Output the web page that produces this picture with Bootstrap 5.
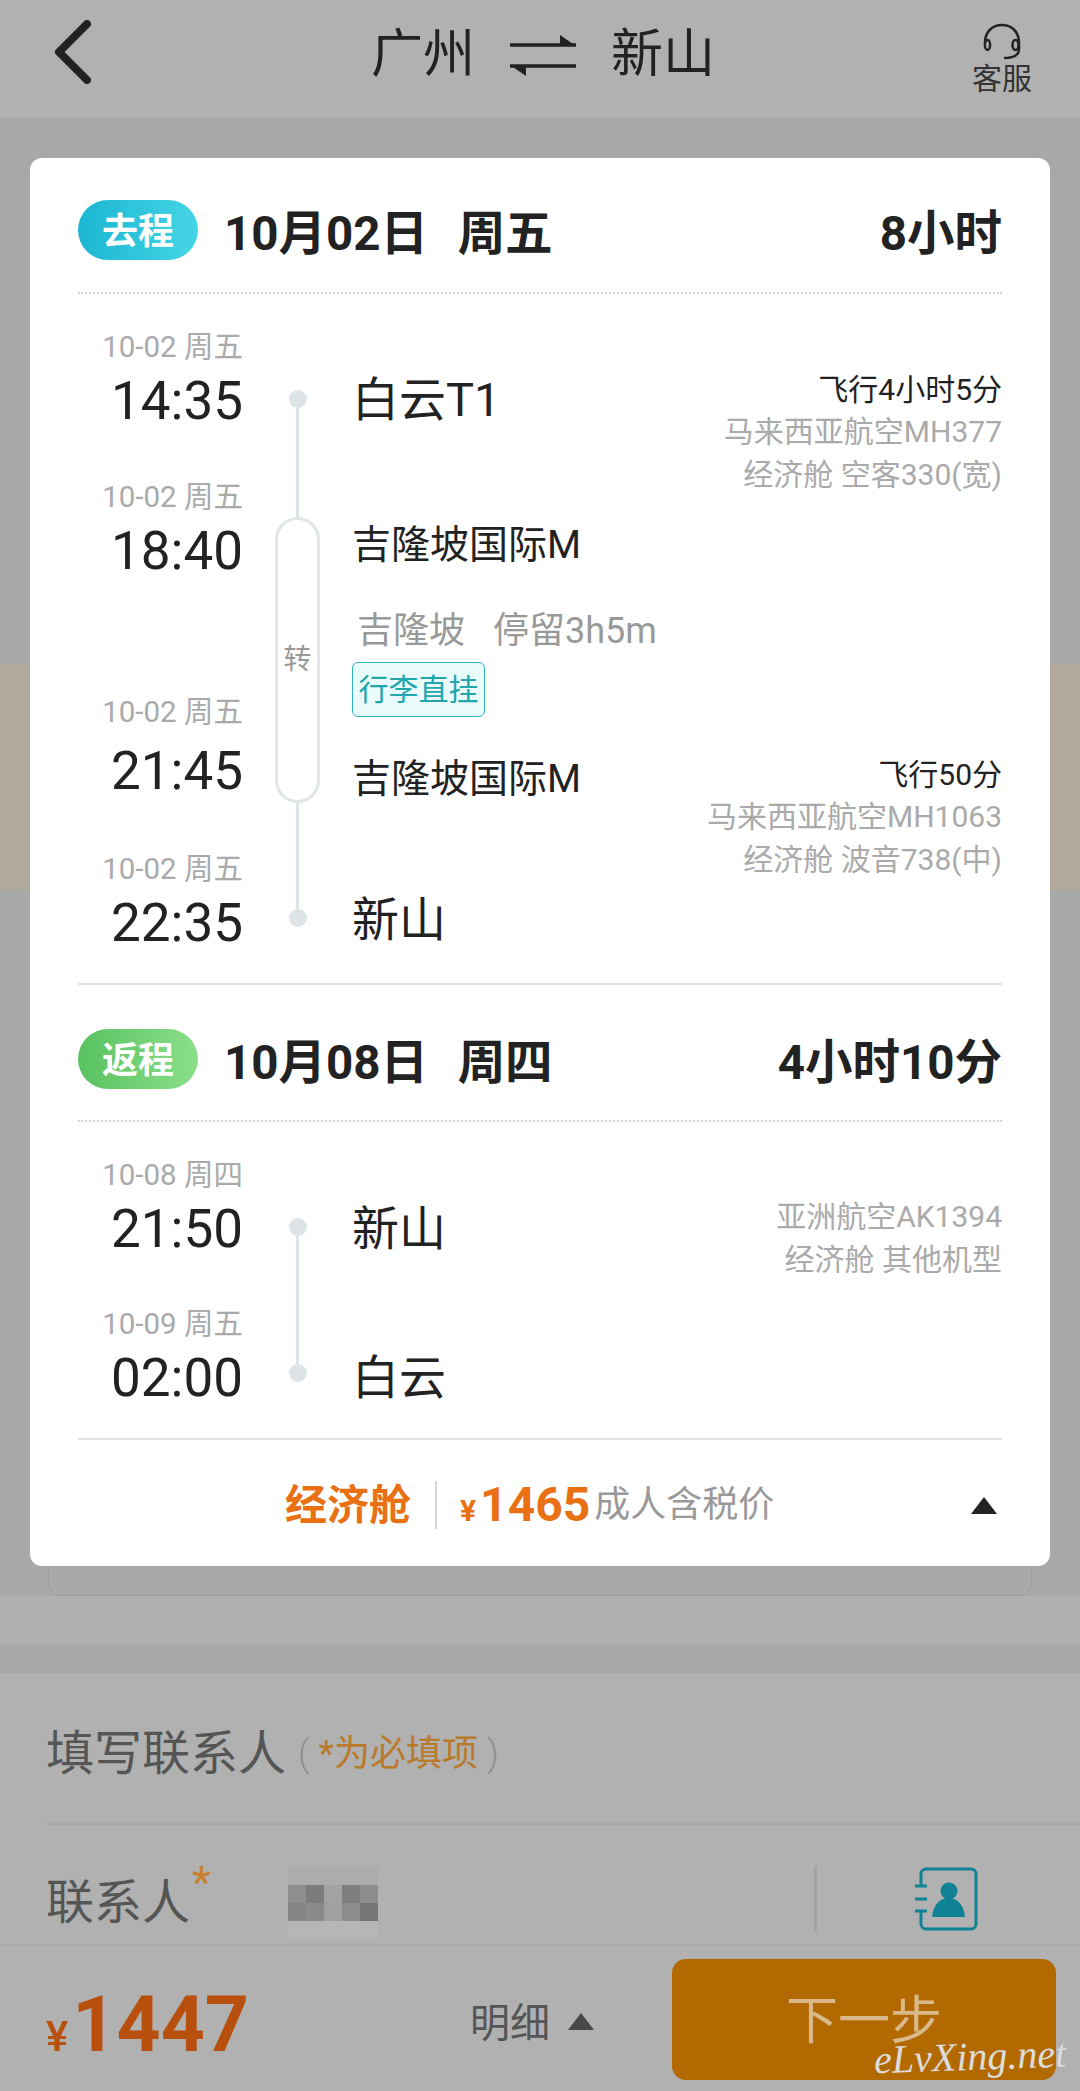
<!DOCTYPE html>
<html lang="zh-CN">
<head>
    <meta charset="UTF-8">
    <meta name="viewport" content="width=device-width, initial-scale=1.0">
    <title>填写订单</title>
    <link href="https://cdn.jsdelivr.net/npm/bootstrap@5.3.0/dist/css/bootstrap.min.css" rel="stylesheet">
    <style>
        body {
            margin: 0;
            background: #a9a9a9;
            font-family: Roboto, "Noto Sans CJK SC", sans-serif;
            color: #222;
        }
        .page-wrap { width: 1080px; height: 2091px; overflow: hidden; }

        /* dimmed page under the panel */
        .top-bar { height: 118px; background: #b1b1b1; padding: 0 48px 0 54px; }
        .top-side { flex: 1 1 0; }
        .route-title { font-size: 52px; line-height: 60px; gap: 34px; margin-top: -8px; color: #222; }
        .service { width: 60px; font-size: 30px; line-height: 36px; color: #333; margin-top: 2px; }
        .under-a { height: 545px; background: #a8a8a8; }
        .under-band { height: 227px; background: #b1aa9d; }
        .under-b { height: 706px; background: #a9a9a9; padding: 0 48px; }
        .under-card { height: 100%; border: 1px solid #9e9e9e; border-top: 0; border-radius: 0 0 12px 12px; }
        .under-c { height: 48px; background: #b0b0b0; }
        .under-d { height: 29px; background: #a9a9a9; }
        .contact-box { height: 273px; background: #b1b1b1; padding-left: 46px; }
        .contact-head { height: 152px; border-bottom: 3px solid #a9a9a9; padding-top: 13px; }
        .contact-title { font-size: 48px; color: #555; }
        .contact-note { font-size: 36px; color: #b97a2c; margin-left: 12px; }
        .contact-note i { font-style: normal; color: #8f8f8f; font-weight: 300; }
        .contact-row { height: 121px; margin-left: -46px; padding-left: 46px; padding-top: 28px; border-bottom: 2px solid #a9a9a9; }
        .contact-label { font-size: 48px; color: #555; width: 242px; position: relative; margin-top: 8px; }
        .contact-star { position: absolute; left: 146px; top: -14px; font-size: 44px; line-height: 60px; color: #c9802c; }
        .mosaic-box { margin-top: 8px; }
        .contact-sep { width: 3px; height: 66px; background: #a3a3a3; margin-left: 436px; }
        .contact-icon { margin-left: 98px; }
        .foot-bar { height: 145px; background: #b1b1b1; padding: 13px 24px 11px 46px; }
        .foot-price { width: 424px; color: #b84f0c; font-weight: 700; font-size: 77px; line-height: 1; margin-top: 11px; }
        .foot-price small { font-size: 42px; font-weight: 500; margin-right: 4px; }
        .foot-detail { font-size: 40px; color: #555; gap: 18px; margin-top: 8px; }
        .next-btn {
            width: 384px;
            height: 121px;
            padding-top: 6px;
            font-size: 52px;
            color: #d9b98a;
            background: #b26a00;
            border: 0;
            border-radius: 14px;
        }
        .tri-up { width: 0; height: 0; border-left: 13px solid transparent; border-right: 13px solid transparent; border-bottom: 17px solid #222; }
        .foot-detail .tri-up { border-bottom-color: #484848; margin-top: -4px; }
        .water-mark {
            position: absolute;
            left: 874px;
            top: 2032px;
            font-family: "Liberation Serif", serif;
            font-style: italic;
            font-size: 40px;
            line-height: 50px;
            color: #dcdcdc;
            transform: rotate(-2deg);
        }

        /* flight panel */
        .trip-panel {
            top: 158px;
            left: 30px;
            width: 1020px;
            height: 1408px;
            padding: 0 48px 0 48px;
            border-radius: 12px;
            --bs-card-bg: #fff;
            background: #fff;
        }
        .trip-head { height: 136px; padding-top: 42px; border-bottom: 2px dotted #d5d5d5; }
        .trip-tag {
            width: 120px;
            height: 60px;
            margin-right: 26px;
            border-radius: 30px;
            color: #fff;
            font-size: 36px;
            font-weight: 700;
            line-height: 64px;
            text-align: center;
        }
        .tag-go { background: linear-gradient(90deg, #1bb6d2, #45d5e6); }
        .tag-back { background: linear-gradient(90deg, #58c25f, #8cdf8a); }
        .trip-date, .trip-total { font-size: 47.5px; font-weight: 700; line-height: 68px; color: #222; white-space: pre; }
        .trip-date span { margin-left: 6px; }
        .trip-body { border-bottom: 2px solid #dfe3e5; }
        .time-col { width: 165px; text-align: right; }
        .stamp-date { font-size: 29.5px; line-height: 36px; color: #aaa; white-space: nowrap; }
        .stamp-time { font-size: 53px; line-height: 72px; color: #222; }
        .rail-col { width: 109px; }
        .rail-dot { width: 18px; height: 18px; border-radius: 50%; background: #dde4e8; }
        .rail-line { width: 3px; background: #dde4e8; }
        .rail-pill {
            width: 45px;
            height: 286px;
            border: 3px solid #e0e6e8;
            border-radius: 23px;
            color: #999;
            font-size: 28px;
        }
        .main-col { min-width: 0; }
        .place-big { font-size: 47px; line-height: 60px; color: #222; }
        .place-mid { font-size: 39px; line-height: 50px; color: #222; }
        .info-box { text-align: right; font-size: 30px; line-height: 43px; color: #aaa; }
        .info-box b { display: block; font-weight: 400; font-size: 30px; line-height: 41px; margin-top: 1px; color: #222; }
        .stop-text { font-size: 36px; line-height: 50px; color: #999; padding-left: 5px; gap: 28px; margin-top: 36px; }
        .bag-tag {
            width: 133px;
            height: 55px;
            margin-top: 6px;
            border: 1px solid #2fb3bd;
            border-radius: 6px;
            background: #eafbfc;
            color: #21a6ae;
            font-size: 30px;
        }
        .trip-foot { height: 124px; padding-left: 207px; padding-right: 5px; padding-top: 6px; }
        .foot-cabin { font-size: 42px; font-weight: 700; color: #ea7014; }
        .foot-rule { width: 2px; height: 48px; background: #d6d6d6; margin: 0 23px 0 24px; }
        .foot-fare { font-size: 48px; font-weight: 700; color: #ea7014; line-height: 1; }
        .foot-fare small { font-size: 30px; margin-right: 4px; }
        .foot-note { font-size: 36px; color: #999; margin-left: 4px; }

        /* one-off vertical offsets of the timeline columns */
        .go-times { padding-top: 35px; }
        .go-t2 { margin-top: 42px; }
        .go-t3 { margin-top: 107px; }
        .go-s3 { margin-top: 5px; }
        .go-t4 { margin-top: 44px; }
        .go-rail { padding-top: 96px; }
        .go-l1 { height: 109px; }
        .go-l2 { height: 106px; }
        .go-main { padding-top: 74px; }
        .go-p1 { margin-top: 2px; }
        .go-p2 { margin-top: 24px; }
        .go-leg2 { margin-top: 36px; }
        .go-p3 { margin-top: 1px; }
        .go-p4 { margin-top: 9px; height: 91px; }
        .go-body { height: 691px; }
        .back-body { height: 318px; }
        .back-times { padding-top: 35px; }
        .back-t2 { margin-top: 41px; }
        .back-rail { padding-top: 96px; }
        .back-l1 { height: 128px; }
        .back-main { padding-top: 73px; }
        .back-p1 { margin-top: 4px; }
        .back-p2 { margin-top: 67px; }
        .sec-back { margin-top: 44px; }
        .back-head { height: 93px; padding-top: 0; }
    </style>
</head>
<body>
<div class="page-wrap position-relative">

    <!-- page under the overlay -->
    <div class="top-bar d-flex align-items-center">
        <div class="top-side">
            <svg width="38" height="64" viewBox="0 0 38 64" class="d-block" style="margin-top:-14px"><path d="M33 4 L5 32 L33 60" fill="none" stroke="#222" stroke-width="8" stroke-linecap="round" stroke-linejoin="round"/></svg>
        </div>
        <div class="route-title d-flex align-items-center">
            <span>广州</span>
            <svg width="68" height="44" viewBox="0 0 68 44"><path d="M1 12H67M1 33H67" stroke="#222" stroke-width="3.5"/><path d="M51 2L67 13H51Z" fill="#222"/><path d="M1 32H17V43Z" fill="#222"/></svg>
            <span>新山</span>
        </div>
        <div class="top-side d-flex justify-content-end">
            <div class="service text-center">
                <svg width="40" height="38" viewBox="0 0 40 38" class="d-block mx-auto"><path d="M3 20C3 8 11 2 20 2S37 8 37 20V26C37 32 32 35 22 35" fill="none" stroke="#222" stroke-width="2.5"/><ellipse cx="5.5" cy="22" rx="2.6" ry="5" fill="none" stroke="#222" stroke-width="2.5"/><ellipse cx="33.5" cy="22" rx="3" ry="5" fill="none" stroke="#222" stroke-width="2.5"/></svg>
                客服
            </div>
        </div>
    </div>
    <div class="under-a"></div>
    <div class="under-band"></div>
    <div class="under-b"><div class="under-card"></div></div>
    <div class="under-c"></div>
    <div class="under-d"></div>
    <div class="contact-box">
        <div class="contact-head d-flex align-items-center">
            <span class="contact-title">填写联系人</span>
            <span class="contact-note"><i>(</i> *为必填项 <i>)</i></span>
        </div>
        <div class="contact-row d-flex align-items-center">
            <span class="contact-label">联系人<span class="contact-star">*</span></span>
            <svg width="90" height="72" viewBox="0 0 5 4" shape-rendering="crispEdges" class="mosaic-box d-block">
                <rect width="5" height="1" y="0" fill="#acacac"/>
                <rect x="0" y="1" width="1" height="1" fill="#8e8e8e"/><rect x="1" y="1" width="1" height="1" fill="#7c7c7c"/><rect x="2" y="1" width="1" height="1" fill="#a2a2a2"/><rect x="3" y="1" width="1" height="1" fill="#7d7d7d"/><rect x="4" y="1" width="1" height="1" fill="#8c8c8c"/>
                <rect x="0" y="2" width="1" height="1" fill="#868686"/><rect x="1" y="2" width="1" height="1" fill="#8a8a8a"/><rect x="2" y="2" width="1" height="1" fill="#a0a0a0"/><rect x="3" y="2" width="1" height="1" fill="#8c8c8c"/><rect x="4" y="2" width="1" height="1" fill="#757575"/>
                <rect width="5" height="1" y="3" fill="#b6b6b6"/>
            </svg>
            <div class="contact-sep"></div>
            <svg class="contact-icon" width="64" height="64" viewBox="0 0 64 64"><path d="M6 19V7a5 5 0 0 1 5-5H56a5 5 0 0 1 5 5V57a5 5 0 0 1-5 5H11a5 5 0 0 1-5-5V44" fill="none" stroke="#0f8295" stroke-width="3"/><path d="M0 19H12M0 32H12M0 44H12" stroke="#0f8295" stroke-width="3"/><circle cx="34" cy="24" r="8.5" fill="#0f8295"/><path d="M17 50C18 38 25 31 33.5 31S49 38 50 50Z" fill="#0f8295"/></svg>
        </div>
    </div>
    <div class="foot-bar d-flex align-items-center">
        <div class="foot-price"><small>¥</small>1447</div>
        <div class="foot-detail d-flex align-items-center">明细<span class="tri-up"></span></div>
        <button type="button" class="next-btn ms-auto">下一步</button>
    </div>

    <!-- overlay panel -->
    <div class="trip-panel card border-0 position-absolute">
        <div class="trip-head d-flex align-items-start">
            <div class="trip-tag tag-go">去程</div>
            <div class="trip-date">10月02日  <span>周五</span></div>
            <div class="trip-total ms-auto">8小时</div>
        </div>
        <div class="trip-body go-body d-flex">
            <div class="time-col go-times">
                <div class="stamp-date">10-02 周五</div><div class="stamp-time">14:35</div>
                <div class="stamp-date go-t2">10-02 周五</div><div class="stamp-time">18:40</div>
                <div class="stamp-date go-t3">10-02 周五</div><div class="stamp-time go-s3">21:45</div>
                <div class="stamp-date go-t4">10-02 周五</div><div class="stamp-time">22:35</div>
            </div>
            <div class="rail-col go-rail d-flex flex-column align-items-center">
                <div class="rail-dot"></div>
                <div class="rail-line go-l1"></div>
                <div class="rail-pill d-flex align-items-center justify-content-center">转</div>
                <div class="rail-line go-l2"></div>
                <div class="rail-dot"></div>
            </div>
            <div class="main-col go-main flex-grow-1">
                <div class="d-flex justify-content-between align-items-start">
                    <div class="place-big go-p1">白云T1</div>
                    <div class="info-box"><b>飞行4小时5分</b>马来西亚航空MH377<br>经济舱 空客330(宽)</div>
                </div>
                <div class="place-mid go-p2">吉隆坡国际M</div>
                <div class="stop-text d-flex"><span>吉隆坡</span><span>停留3h5m</span></div>
                <div class="bag-tag d-flex align-items-center justify-content-center">行李直挂</div>
                <div class="d-flex justify-content-between align-items-start go-leg2">
                    <div class="place-mid go-p3">吉隆坡国际M</div>
                    <div class="info-box"><b>飞行50分</b>马来西亚航空MH1063<br>经济舱 波音738(中)</div>
                </div>
                <div class="place-big go-p4">新山</div>
            </div>
        </div>

        <div class="trip-head back-head sec-back d-flex align-items-start">
            <div class="trip-tag tag-back">返程</div>
            <div class="trip-date">10月08日  <span>周四</span></div>
            <div class="trip-total ms-auto">4小时10分</div>
        </div>
        <div class="trip-body back-body d-flex">
            <div class="time-col back-times">
                <div class="stamp-date">10-08 周四</div><div class="stamp-time">21:50</div>
                <div class="stamp-date back-t2">10-09 周五</div><div class="stamp-time">02:00</div>
            </div>
            <div class="rail-col back-rail d-flex flex-column align-items-center">
                <div class="rail-dot"></div>
                <div class="rail-line back-l1"></div>
                <div class="rail-dot"></div>
            </div>
            <div class="main-col back-main flex-grow-1">
                <div class="d-flex justify-content-between align-items-start">
                    <div class="place-big back-p1">新山</div>
                    <div class="info-box">亚洲航空AK1394<br>经济舱 其他机型</div>
                </div>
                <div class="place-big back-p2">白云</div>
            </div>
        </div>

        <div class="trip-foot d-flex align-items-center">
            <span class="foot-cabin">经济舱</span>
            <span class="foot-rule"></span>
            <span class="foot-fare"><small>¥</small>1465</span>
            <span class="foot-note">成人含税价</span>
            <span class="tri-up ms-auto"></span>
        </div>
    </div>

    <div class="water-mark">eLvXing.net</div>
</div>
<script src="https://cdn.jsdelivr.net/npm/bootstrap@5.3.0/dist/js/bootstrap.bundle.min.js"></script>
</body>
</html>
